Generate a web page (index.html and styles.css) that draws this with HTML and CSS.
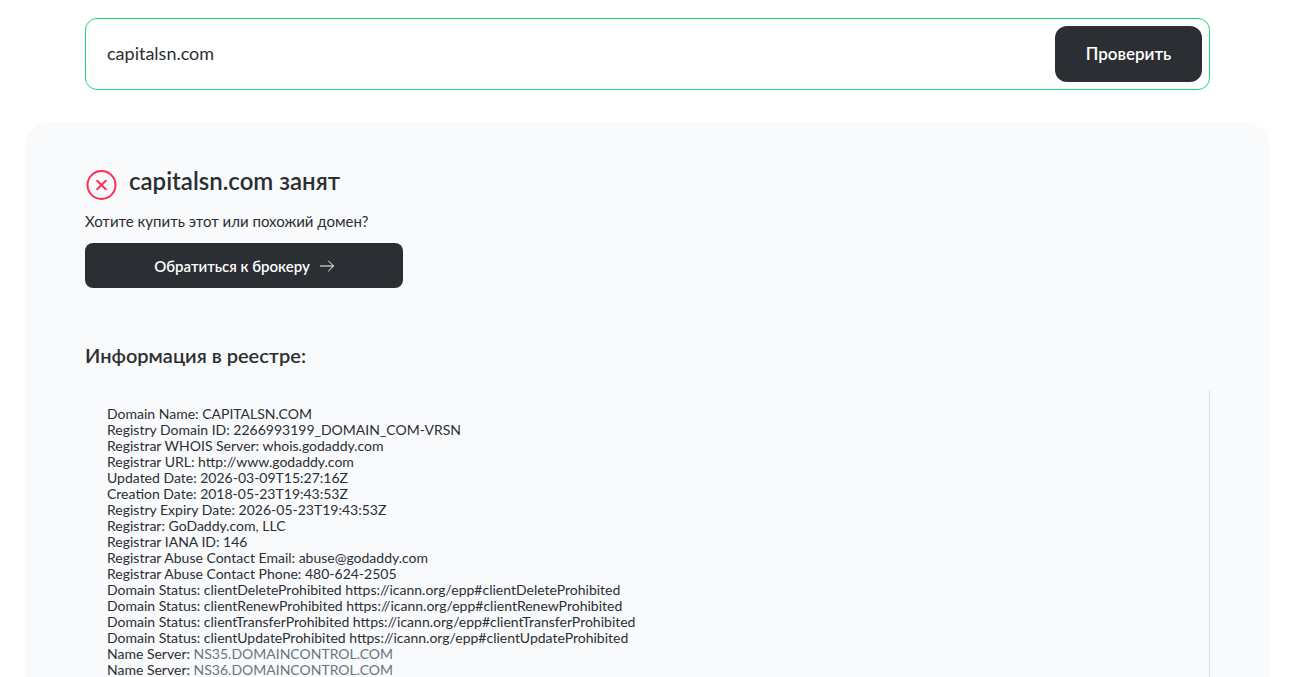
FILE: index.html
```
<!DOCTYPE html>
<html lang="ru">
	<head>
		<title>Whois capitalsn.com</title>
		<meta charset="UTF-8">
		<meta name="viewport" content="width=device-width, initial-scale=1">
		<link rel="stylesheet" href="styles.css">
	</head>
	<body>
		<main class="page">
			<form class="search">
				<input class="search_input" type="text" name="domain" value="capitalsn.com" aria-label="Домен">
				<button class="search_button" type="submit">Проверить</button>
			</form>

			<section class="result">
				<div class="result_head">
					<svg class="result_icon" viewBox="0 0 32 32" fill="none" stroke="#ff2e57" stroke-width="2" stroke-linecap="round">
						<circle cx="16.5" cy="16" r="14"/>
						<path d="M12.2 11.7l8.6 8.6M20.8 11.7l-8.6 8.6"/>
					</svg>
					<h1 class="result_title">capitalsn.com занят</h1>
				</div>
				<p class="result_text">Хотите купить этот или похожий домен?</p>
				<button class="broker_button" type="button">
					Обратиться к брокеру
					<svg class="broker_arrow" viewBox="0 0 14 12" fill="none" stroke="#fff" stroke-linecap="round" stroke-linejoin="round">
						<path d="M0.5 6h13M8.5 1l5 5-5 5"/>
					</svg>
				</button>

				<h2 class="registry_title">Информация в реестре:</h2>
				<pre class="registry">Domain Name: CAPITALSN.COM
Registry Domain ID: 2266993199_DOMAIN_COM-VRSN
Registrar WHOIS Server: whois.godaddy.com
Registrar URL: http://www.godaddy.com
Updated Date: 2026-03-09T15:27:16Z
Creation Date: 2018-05-23T19:43:53Z
Registry Expiry Date: 2026-05-23T19:43:53Z
Registrar: GoDaddy.com, LLC
Registrar IANA ID: 146
Registrar Abuse Contact Email: abuse@godaddy.com
Registrar Abuse Contact Phone: 480-624-2505
Domain Status: clientDeleteProhibited https://icann.org/epp#clientDeleteProhibited
Domain Status: clientRenewProhibited https://icann.org/epp#clientRenewProhibited
Domain Status: clientTransferProhibited https://icann.org/epp#clientTransferProhibited
Domain Status: clientUpdateProhibited https://icann.org/epp#clientUpdateProhibited
Name Server: <a class="registry_link" href="#">NS35.DOMAINCONTROL.COM</a>
Name Server: <a class="registry_link" href="#">NS36.DOMAINCONTROL.COM</a></pre>
			</section>
		</main>
	</body>
</html>
```
FILE: styles.css
```
* {
	box-sizing: border-box;
}

body {
	margin: 0;
	background-color: #fff;
	color: #2b2e33;
	font-family: Lato, "Open Sans", sans-serif;
}

button, input {
	font-family: inherit;
}

.page {
	padding: 18px 45px 0 25px;
}

.search {
	display: flex;
	height: 72px;
	margin: 0 60px 33px;
	padding: 7px;
	border: 1px solid #21d979;
	border-radius: 12px;
}

.search_input {
	flex: 1;
	min-width: 0;
	padding: 0 14px 2px;
	border: none;
	outline: none;
	background: none;
	color: inherit;
	font-size: 18px;
}

.search_button {
	width: 147px;
	padding: 0 0 2px;
	border: none;
	border-radius: 12px;
	background-color: #2b2e33;
	color: #fff;
	font-size: 17px;
	font-weight: 600;
}

.result {
	padding: 40px 60px 60px;
	border-radius: 24px;
	background-color: #f9fafc;
}

.result_head {
	display: flex;
	align-items: flex-start;
	gap: 12px;
}

.result_icon {
	width: 32px;
	height: 32px;
	margin-top: 6px;
}

.result_title {
	margin: 0;
	font-size: 24px;
	line-height: 36px;
	font-weight: 600;
}

.result_text {
	margin: 10px 0 11px;
	font-size: 15px;
	line-height: 21px;
}

.broker_button {
	display: flex;
	align-items: center;
	justify-content: center;
	gap: 10px;
	width: 318px;
	height: 45px;
	border: none;
	border-radius: 8px;
	background-color: #2b2e33;
	color: #fff;
	font-size: 15px;
	font-weight: 600;
}

.broker_arrow {
	width: 14px;
	height: 12px;
}

.registry_title {
	margin: 55px 0 23px;
	font-size: 20px;
	line-height: 24px;
	font-weight: 600;
}

.registry {
	margin: 0;
	padding: 16px 22px;
	border-right: 1px solid #dfe1e3;
	font-family: inherit;
	font-size: 14px;
	line-height: 16px;
	white-space: pre-wrap;
}

.registry_link {
	color: #6c757d;
	text-decoration: none;
}
```
